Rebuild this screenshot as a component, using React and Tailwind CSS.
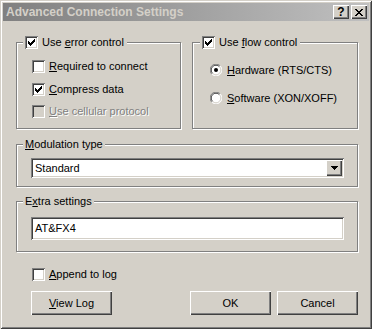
import React from "react";

function CheckMark({ color = "#000" }) {
  return (
    <svg width="7" height="7" viewBox="0 0 7 7" shapeRendering="crispEdges" className="absolute left-[3px] top-[3px]">
      <g fill={color}>
        <rect x="6" y="0" width="1" height="1" />
        <rect x="5" y="1" width="2" height="1" />
        <rect x="0" y="2" width="1" height="1" />
        <rect x="4" y="2" width="3" height="1" />
        <rect x="0" y="3" width="2" height="1" />
        <rect x="3" y="3" width="3" height="1" />
        <rect x="0" y="4" width="5" height="1" />
        <rect x="1" y="5" width="3" height="1" />
        <rect x="2" y="6" width="1" height="1" />
      </g>
    </svg>
  );
}

function Check({ checked, disabled }) {
  return (
    <span
      className={
        disabled
          ? "relative inline-block w-[13px] h-[13px] shrink-0 bg-[#d4d0c8] shadow-[inset_1px_1px_0_#808080,inset_-1px_-1px_0_#ffffff,inset_2px_2px_0_#404040,inset_-2px_-2px_0_#d4d0c8]"
          : "relative inline-block w-[13px] h-[13px] shrink-0 bg-white shadow-[inset_1px_1px_0_#808080,inset_-1px_-1px_0_#ffffff,inset_2px_2px_0_#404040,inset_-2px_-2px_0_#d4d0c8]"
      }
    >
      {checked && <CheckMark />}
    </span>
  );
}

function Radio({ checked }) {
  return (
    <span className="relative inline-block w-[12px] h-[12px] shrink-0">
      <svg width="12" height="12" viewBox="0 0 12 12" className="absolute left-0 top-0">
        <circle cx="6" cy="6" r="5.5" fill="#ffffff" />
        <path d="M1.8 10.2 A5.5 5.5 0 0 1 10.2 1.8" stroke="#808080" strokeWidth="1" fill="none" />
        <path d="M2.6 9.4 A4.4 4.4 0 0 1 9.4 2.6" stroke="#404040" strokeWidth="1" fill="none" />
        <path d="M10.2 1.8 A5.5 5.5 0 0 1 1.8 10.2" stroke="#ffffff" strokeWidth="1" fill="none" />
        <path d="M9.4 2.6 A4.4 4.4 0 0 1 2.6 9.4" stroke="#d4d0c8" strokeWidth="1" fill="none" />
        {checked && <circle cx="6" cy="6" r="2" fill="#000" />}
      </svg>
    </span>
  );
}

function U({ children }) {
  return <span className="underline underline-offset-[1px] decoration-[1px]">{children}</span>;
}

function Button({ children, className }) {
  return (
    <div
      className={
        "h-[24px] flex items-center justify-center bg-[#d4d0c8] shadow-[inset_1px_1px_0_#ffffff,inset_-1px_-1px_0_#404040,inset_-2px_-2px_0_#808080] " +
        className
      }
    >
      {children}
    </div>
  );
}

const groupCls =
  "relative border border-[#808080] shadow-[1px_1px_0_#ffffff,inset_1px_1px_0_#ffffff]";

export default function App() {
  return (
    <div className="w-[372px] h-[329px] bg-[#d4d0c8] p-[3px] shadow-[inset_1px_1px_0_#d4d0c8,inset_-1px_-1px_0_#404040,inset_2px_2px_0_#ffffff,inset_-2px_-2px_0_#808080] font-['Liberation_Sans',Arial,sans-serif] text-[11px] leading-[13px] text-black overflow-hidden">
      {/* Title bar */}
      <div className="h-[18px] flex items-center bg-gradient-to-r from-[#808080] to-[#c0c0c0] pl-[3px] pr-[2px]">
        <span className="flex-1 font-bold text-[12px] text-[#d4d0c8]">Advanced Connection Settings</span>
        <div className="w-[16px] h-[14px] flex items-center justify-center bg-[#d4d0c8] shadow-[inset_1px_1px_0_#ffffff,inset_-1px_-1px_0_#404040,inset_-2px_-2px_0_#808080] font-bold text-[12px] leading-none pb-[1px]">
          ?
        </div>
        <div className="ml-[2px] w-[16px] h-[14px] flex items-center justify-center bg-[#d4d0c8] shadow-[inset_1px_1px_0_#ffffff,inset_-1px_-1px_0_#404040,inset_-2px_-2px_0_#808080]">
          <svg width="8" height="7" viewBox="0 0 8 7" shapeRendering="crispEdges">
            <path d="M0 0h2v1H0zM6 0h2v1H6zM1 1h2v1H1zM5 1h2v1H5zM2 2h4v1H2zM3 3h2v1H3zM2 4h4v1H2zM1 5h2v1H1zM5 5h2v1H5zM0 6h2v1H0zM6 6h2v1H6z" fill="#000" />
          </svg>
        </div>
      </div>

      {/* Client */}
      <div className="pl-[13px] pt-[21px]">
        <div className="flex">
          {/* Error control group */}
          <div className={groupCls + " w-[165px] h-[87px]"}>
            <div className="absolute left-[6px] top-[-7px] flex items-center bg-[#d4d0c8] pl-[2px] pr-[3px]">
              <Check checked />
              <span className="ml-[4px]">
                Use <U>e</U>rror control
              </span>
            </div>
            <div className="pl-[15px] pt-[17px] flex flex-col">
              <div className="flex items-center h-[13px]">
                <Check />
                <span className="ml-[4px]">
                  <U>R</U>equired to connect
                </span>
              </div>
              <div className="flex items-center h-[13px] mt-[10px]">
                <Check checked />
                <span className="ml-[4px]">
                  <U>C</U>ompress data
                </span>
              </div>
              <div className="flex items-center h-[13px] mt-[9px]">
                <Check disabled />
                <span className="ml-[4px] text-[#808080] [text-shadow:1px_1px_0_#ffffff]">
                  <U>U</U>se cellular protocol
                </span>
              </div>
            </div>
          </div>

          {/* Flow control group */}
          <div className={groupCls + " ml-[11px] w-[166px] h-[87px]"}>
            <div className="absolute left-[7px] top-[-7px] flex items-center bg-[#d4d0c8] pl-[2px] pr-[3px]">
              <Check checked />
              <span className="ml-[4px]">
                Use <U>f</U>low control
              </span>
            </div>
            <div className="pl-[17px] pt-[21px] flex flex-col">
              <div className="flex items-center h-[12px]">
                <Radio checked />
                <span className="ml-[5px]">
                  <U>H</U>ardware (RTS/CTS)
                </span>
              </div>
              <div className="flex items-center h-[12px] mt-[16px]">
                <Radio />
                <span className="ml-[5px]">
                  <U>S</U>oftware (XON/XOFF)
                </span>
              </div>
            </div>
          </div>
        </div>

        {/* Modulation type */}
        <div className={groupCls + " mt-[15px] w-[342px] h-[43px]"}>
          <div className="absolute left-[6px] top-[-7px] bg-[#d4d0c8] px-[2px]">
            <U>M</U>odulation type
          </div>
          <div className="ml-[14px] mt-[13px] w-[313px] h-[20px] bg-white flex items-center shadow-[inset_1px_1px_0_#808080,inset_-1px_-1px_0_#ffffff,inset_2px_2px_0_#404040,inset_-2px_-2px_0_#d4d0c8] p-[2px]">
            <span className="flex-1 pl-[2px]">Standard</span>
            <div className="w-[16px] h-[16px] flex items-center justify-center bg-[#d4d0c8] shadow-[inset_1px_1px_0_#ffffff,inset_-1px_-1px_0_#404040,inset_-2px_-2px_0_#808080]">
              <svg width="7" height="4" viewBox="0 0 7 4" shapeRendering="crispEdges">
                <path d="M0 0h7v1H0zM1 1h5v1H1zM2 2h3v1H2zM3 3h1v1H3z" fill="#000" />
              </svg>
            </div>
          </div>
        </div>

        {/* Extra settings */}
        <div className={groupCls + " mt-[14px] w-[342px] h-[51px]"}>
          <div className="absolute left-[6px] top-[-7px] bg-[#d4d0c8] px-[2px]">
            E<U>x</U>tra settings
          </div>
          <div className="ml-[14px] mt-[15px] w-[313px] h-[23px] bg-white flex items-center shadow-[inset_1px_1px_0_#808080,inset_-1px_-1px_0_#ffffff,inset_2px_2px_0_#404040,inset_-2px_-2px_0_#d4d0c8] pl-[4px]">
            AT&amp;FX4
          </div>
        </div>

        {/* Append to log */}
        <div className="mt-[16px] ml-[16px] flex items-center h-[13px]">
          <Check />
          <span className="ml-[4px]">
            <U>A</U>ppend to log
          </span>
        </div>

        {/* Buttons */}
        <div className="mt-[10px] flex ml-[15px]">
          <Button className="w-[81px]">
            <span>
              <U>V</U>iew Log
            </span>
          </Button>
          <Button className="ml-[78px] w-[81px]">OK</Button>
          <Button className="ml-[6px] w-[81px]">Cancel</Button>
        </div>
      </div>
    </div>
  );
}
